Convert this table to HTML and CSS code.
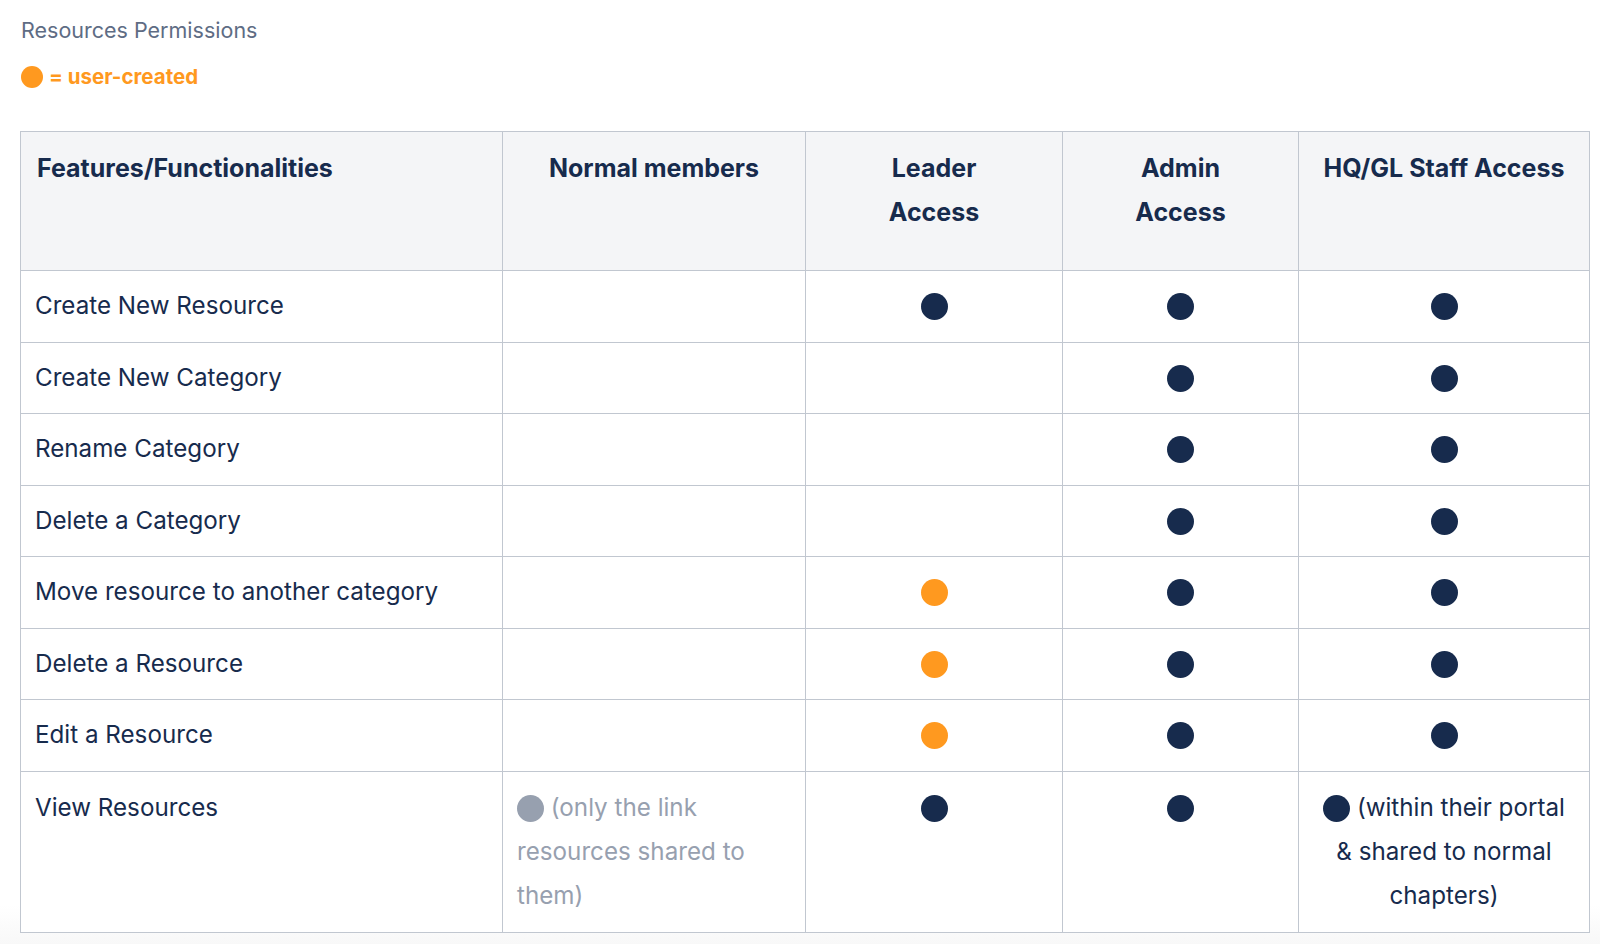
FILE: index.html
```html
<!DOCTYPE html>
<html lang="en">
<head>
<meta charset="utf-8">
<title>Resources Permissions</title>
<link rel="stylesheet" href="styles.css">
</head>
<body>
<main class="page">
  <h1 class="title">Resources Permissions</h1>
  <p class="legend"><span class="dot dot-orange dot-legend"></span> = user-created</p>
  <table class="perm">
    <colgroup>
      <col class="c1"><col class="c2"><col class="c3"><col class="c4"><col class="c5">
    </colgroup>
    <thead>
      <tr>
        <th class="left">Features/Functionalities</th>
        <th>Normal members</th>
        <th>Leader<br>Access</th>
        <th>Admin<br>Access</th>
        <th>HQ/GL Staff Access</th>
      </tr>
    </thead>
    <tbody>
      <tr>
        <td>Create New Resource</td>
        <td></td>
        <td class="mid"><span class="dot dot-navy"></span></td>
        <td class="mid"><span class="dot dot-navy"></span></td>
        <td class="mid"><span class="dot dot-navy"></span></td>
      </tr>
      <tr>
        <td>Create New Category</td>
        <td></td>
        <td class="mid"></td>
        <td class="mid"><span class="dot dot-navy"></span></td>
        <td class="mid"><span class="dot dot-navy"></span></td>
      </tr>
      <tr>
        <td>Rename Category</td>
        <td></td>
        <td class="mid"></td>
        <td class="mid"><span class="dot dot-navy"></span></td>
        <td class="mid"><span class="dot dot-navy"></span></td>
      </tr>
      <tr>
        <td>Delete a Category</td>
        <td></td>
        <td class="mid"></td>
        <td class="mid"><span class="dot dot-navy"></span></td>
        <td class="mid"><span class="dot dot-navy"></span></td>
      </tr>
      <tr>
        <td>Move resource to another category</td>
        <td></td>
        <td class="mid"><span class="dot dot-orange"></span></td>
        <td class="mid"><span class="dot dot-navy"></span></td>
        <td class="mid"><span class="dot dot-navy"></span></td>
      </tr>
      <tr>
        <td>Delete a Resource</td>
        <td></td>
        <td class="mid"><span class="dot dot-orange"></span></td>
        <td class="mid"><span class="dot dot-navy"></span></td>
        <td class="mid"><span class="dot dot-navy"></span></td>
      </tr>
      <tr>
        <td>Edit a Resource</td>
        <td></td>
        <td class="mid"><span class="dot dot-orange"></span></td>
        <td class="mid"><span class="dot dot-navy"></span></td>
        <td class="mid"><span class="dot dot-navy"></span></td>
      </tr>
      <tr class="tall">
        <td>View Resources</td>
        <td class="muted"><span class="dot dot-grey"></span> (only the link resources shared to them)</td>
        <td class="mid"><span class="dot dot-navy"></span></td>
        <td class="mid"><span class="dot dot-navy"></span></td>
        <td class="mid"><span class="dot dot-navy"></span> (within their portal<br>&amp; shared to normal chapters)</td>
      </tr>
    </tbody>
  </table>
</main>
</body>
</html>
```

FILE: styles.css
```css
html, body {
  margin: 0;
  padding: 0;
}

html {
  background: #ffffff;
}

body {
  min-height: 944px;
  box-sizing: border-box;
  background: linear-gradient(to bottom, #ffffff 0, #ffffff 905px, #f8f8f8 944px);
  font-family: Inter, "Noto Sans", "Liberation Sans", sans-serif;
  color: #172b4d;
}

.page {
  padding: 17px 11px 0 20px;
}

.title {
  margin: 0 0 0 1px;
  font-size: 21.5px;
  line-height: 26px;
  font-weight: 400;
  color: #5e6c84;
}

.legend {
  margin: 21px 0 0 1px;
  font-size: 20.5px;
  line-height: 26px;
  font-weight: 700;
  color: #ff991f;
  display: flex;
  align-items: center;
  gap: 6px;
}

.dot {
  display: inline-block;
  width: 27px;
  height: 27px;
  border-radius: 50%;
  vertical-align: -6px;
}

.dot-legend {
  width: 22px;
  height: 22px;
}

.dot-navy { background: #172b4d; }
.dot-orange { background: #ff991f; }
.dot-grey { background: #97a0af; }

.perm {
  margin-top: 41px;
  border-collapse: collapse;
  table-layout: fixed;
  width: 1569px;
  font-size: 24.2px;
  line-height: 44px;
  background: #ffffff;
}

.c1 { width: 482px; }
.c2 { width: 303px; }
.c3 { width: 257px; }
.c4 { width: 236px; }
.c5 { width: 291px; }

.perm th,
.perm td {
  border: 1px solid #c1c7d0;
  padding: 13.25px 14px;
  vertical-align: top;
}

.perm tr.tall td {
  padding-top: 14px;
  padding-bottom: 14px;
}

.perm th {
  background: #f4f5f7;
  font-weight: 700;
  font-size: 25px;
  text-align: center;
  padding: 14px 14px 36px;
}

.perm th.left {
  text-align: left;
  padding-left: 16px;
}

.perm td.mid {
  text-align: center;
}

.perm td.muted {
  color: #97a0af;
}
```
